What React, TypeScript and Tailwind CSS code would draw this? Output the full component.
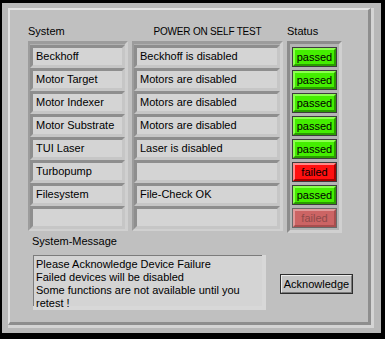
import React from 'react';

const rows = [
  { name: 'Beckhoff', test: 'Beckhoff is disabled', ok: true },
  { name: 'Motor Target', test: 'Motors are disabled', ok: true },
  { name: 'Motor Indexer', test: 'Motors are disabled', ok: true },
  { name: 'Motor Substrate', test: 'Motors are disabled', ok: true },
  { name: 'TUI Laser', test: 'Laser is disabled', ok: true },
  { name: 'Turbopump', test: '', ok: false },
  { name: 'Filesystem', test: 'File-Check OK', ok: true },
  { name: '', test: '', ok: false, off: true },
];

const Field: React.FC<{ text: string; width: string }> = ({ text, width }) => (
  <div className="h-[23px] border-[3px] border-t-[#8e8e8e] border-l-[#8e8e8e] border-b-[#c6c6c6] border-r-[#c6c6c6]">
    <div className={`${width} h-[17px] bg-[#d4d4d4] pl-[3px] leading-[17px] whitespace-nowrap overflow-hidden`}>
      {text}
    </div>
  </div>
);

const StatusLed: React.FC<{ ok: boolean; off?: boolean }> = ({ ok, off }) => {
  if (ok) {
    return (
      <div className="h-[20px] w-[45px] border border-[#3c3c3c]">
        <div className="h-full border-2 border-t-[#8cff50] border-l-[#8cff50] border-b-[#2a9c00] border-r-[#2a9c00] bg-[#44ee00] text-center leading-[15px] text-black">
          passed
        </div>
      </div>
    );
  }
  if (off) {
    return (
      <div className="h-[20px] w-[45px] border border-[#6a6a6a]">
        <div className="h-full border-2 border-t-[#e09a9a] border-l-[#e09a9a] border-b-[#a84e4e] border-r-[#a84e4e] bg-[#cc6464] text-center leading-[15px] text-[#8c4a4a]">
          failed
        </div>
      </div>
    );
  }
  return (
    <div className="h-[20px] w-[45px] border border-[#3c3c3c]">
      <div className="h-full border-2 border-t-[#ff8a8a] border-l-[#ff8a8a] border-b-[#a80000] border-r-[#a80000] bg-[#ff1010] text-center leading-[15px] text-black">
        failed
      </div>
    </div>
  );
};

export default function App() {
  return (
    <div
      className="w-[385px] h-[339px] bg-black pt-[3px] pl-[2px] pr-[4px] pb-[6px] text-[11px] text-black"
      style={{ fontFamily: '"Liberation Sans", Arial, sans-serif' }}
    >
      <div className="h-full bg-[#b8b8b8] pt-[5px] pl-[6px] pr-[7px] pb-[5px]">
        <div className="h-full border-r-[3px] border-b-[3px] border-[#d4d4d4]">
          <div className="h-full bg-[#c0c0c0] border-t-2 border-l-2 border-t-[#e2e2e2] border-l-[#e2e2e2] border-r-[3px] border-b-[3px] border-r-[#8e8e8e] border-b-[#8e8e8e] pt-[15px] pl-[18px]">
            <div className="flex gap-[4px] h-[13px] leading-[13px] mb-[3px]">
              <div className="w-[100px]">System</div>
              <div className="w-[151px] text-center text-[10px] tracking-[-0.2px]">POWER ON SELF TEST</div>
              <div className="w-[55px]">Status</div>
            </div>

            <div className="flex gap-[4px]">
              <div className="w-[100px] h-[190px] bg-[#b0b0b0] pt-[1px] border-t-[3px] border-l-2 border-t-[#9c9c9c] border-l-[#9c9c9c] border-r-[3px] border-b-2 border-r-[#d0d0d0] border-b-[#d0d0d0]">
                {rows.map((r, i) => (
                  <Field key={i} text={r.name} width="w-[89px]" />
                ))}
              </div>
              <div className="w-[151px] h-[190px] bg-[#b0b0b0] pt-[1px] border-t-[3px] border-l-2 border-t-[#9c9c9c] border-l-[#9c9c9c] border-r-[3px] border-b-2 border-r-[#d0d0d0] border-b-[#d0d0d0]">
                {rows.map((r, i) => (
                  <Field key={i} text={r.test} width="w-[140px]" />
                ))}
              </div>
              <div className="w-[55px] h-[192px] bg-[#b4b4b4] flex flex-col gap-[3px] pt-[3px] px-[2px] border-[3px] border-t-[#8c8c8c] border-l-[#8c8c8c] border-r-[#d0d0d0] border-b-[#d0d0d0]">
                {rows.map((r, i) => (
                  <StatusLed key={i} ok={r.ok} off={r.off} />
                ))}
              </div>
            </div>

            <div className="mt-[2px] pl-[4px] leading-[13px]">System-Message</div>

            <div className="flex items-start mt-[7px] pl-[5px]">
              <div className="w-[233px] h-[55px] border-r-[4px] border-b-[4px] border-[#d8d8d8]">
                <div className="h-full bg-[#d4d4d4] border-t border-l border-[#7c7c7c] pt-[2px] pl-[2px] leading-[13px]">
                  <div>Please Acknowledge Device Failure</div>
                  <div>Failed devices will be disabled</div>
                  <div>Some functions are not available until you</div>
                  <div>retest !</div>
                </div>
              </div>
              <button className="ml-[14px] mt-[19px] w-[73px] h-[20px] border border-[#2e2e2e] bg-[#c4c4c4]">
                <div className="h-full border border-t-[#ececec] border-l-[#ececec] border-b-[#7a7a7a] border-r-[#7a7a7a] leading-[16px] text-center">
                  Acknowledge
                </div>
              </button>
            </div>
          </div>
        </div>
      </div>
    </div>
  );
}
